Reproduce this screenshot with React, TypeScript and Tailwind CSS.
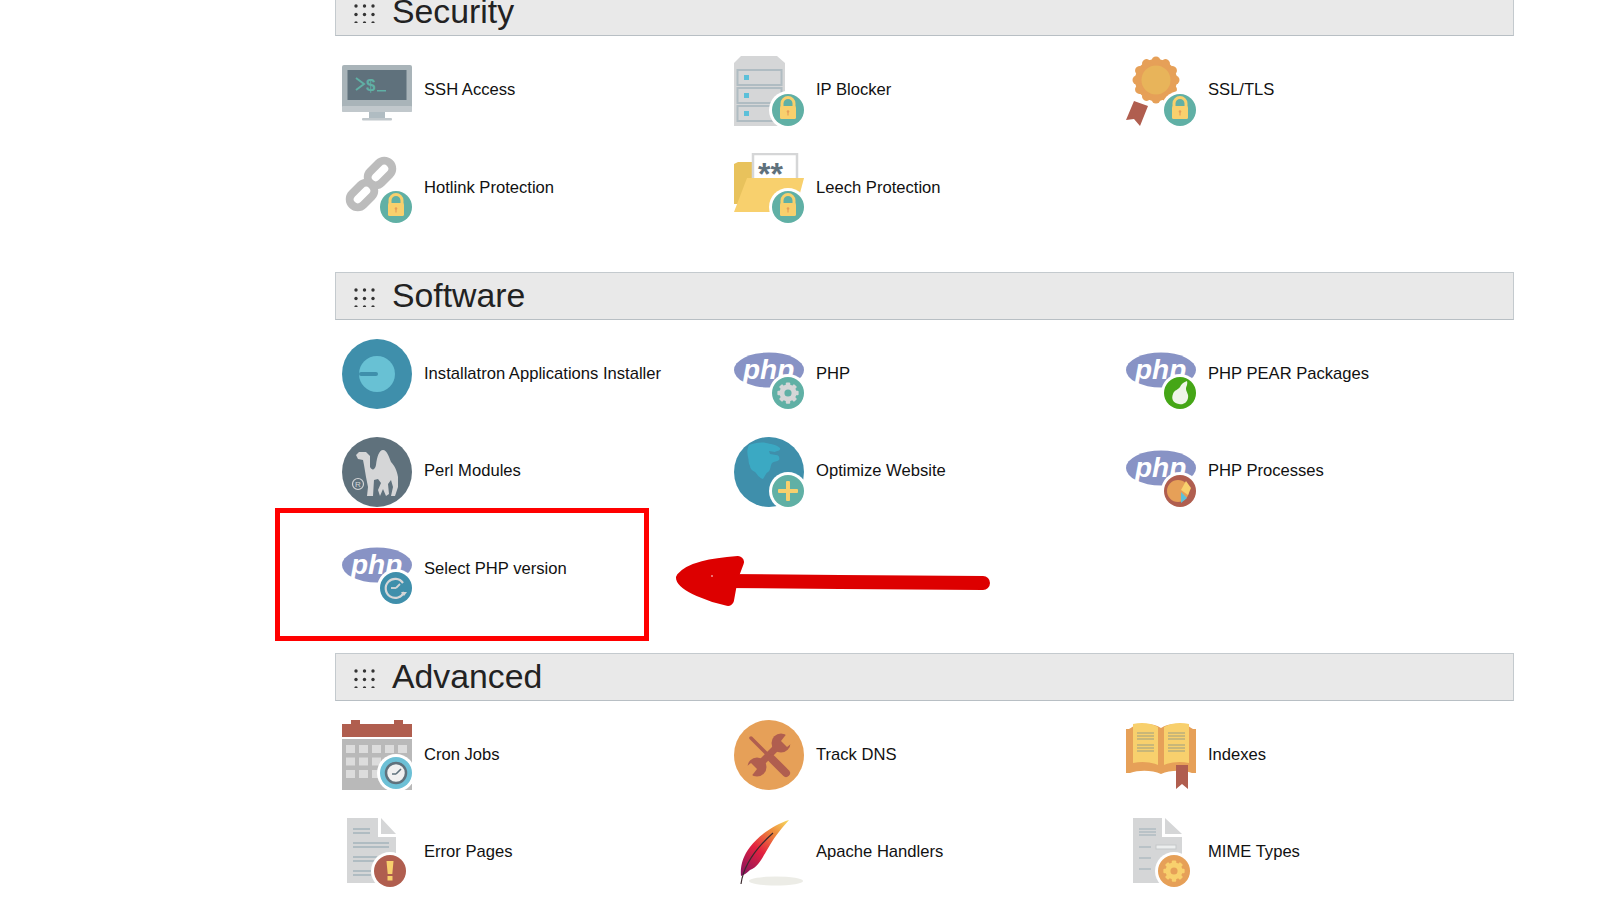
import React from 'react';

const TEAL = '#60b0a5';
const YELLOW = '#f8d06d';
const ORANGE = '#e6a058';
const BROWN = '#b05e4f';
const GRAY = '#d5d6d7';
const SLATE = '#b0bcc2';

// white ring + coloured disc shared by most icons
const Badge = ({ fill, cx = 54, cy = 54, children }: { fill: string; cx?: number; cy?: number; children?: React.ReactNode }) => (
  <g>
    <circle cx={cx} cy={cy} r={19} fill="#fff" />
    <circle cx={cx} cy={cy} r={16} fill={fill} />
    {children}
  </g>
);

const LockBadge = () => (
  <Badge fill={TEAL}>
    <path d="M48 51v-3.500a6 6 0 0 1 12 0V51" fill="none" stroke={YELLOW} strokeWidth="3" />
    <rect x="46" y="50" width="16" height="13" rx="1.500" fill={YELLOW} />
    <circle cx="54" cy="55.500" r="1.300" fill={ORANGE} />
    <rect x="53.400" y="55.500" width="1.200" height="4" fill={ORANGE} />
  </Badge>
);

const PhpLogo = () => (
  <g>
    <ellipse cx="35" cy="31" rx="35" ry="17.500" fill="#8893c5" />
    <text x="9" y="40" fill="#fff" fontFamily="'Liberation Sans', sans-serif" fontSize="28" fontWeight="700" fontStyle="italic">
      php
    </text>
  </g>
);

const GearShape = ({ cx, cy, r, fill, hole }: { cx: number; cy: number; r: number; fill: string; hole: string }) => (
  <g>
    {[0, 45, 90, 135].map((a) => (
      <rect key={a} x={cx - r * 0.26} y={cy - r * 1.25} width={r * 0.52} height={r * 2.5} rx="1" fill={fill} transform={`rotate(${a} ${cx} ${cy})`} />
    ))}
    <circle cx={cx} cy={cy} r={r} fill={fill} />
    <circle cx={cx} cy={cy} r={r * 0.42} fill={hole} />
  </g>
);

const icons: Record<string, React.ReactNode> = {
  ssh: (
    <>
      <rect x="0" y="9" width="70" height="47" rx="2" fill="#a9b4b9" />
      <rect x="0" y="50" width="70" height="6" rx="1" fill="#c1c8cc" />
      <rect x="5.500" y="14" width="59" height="30" fill="#5f717c" />
      <path d="M14 22l8 6-8 6" fill="none" stroke="#60b0a5" strokeWidth="2" />
      <text x="24" y="35" fill="#60b0a5" fontFamily="'Liberation Sans', sans-serif" fontSize="17" fontWeight="700">$</text>
      <rect x="35" y="34" width="9" height="1.500" fill="#60b0a5" />
      <path d="M27 56h16v7H27z" fill="#b0bcc2" />
      <rect x="20" y="62" width="30" height="2.500" rx="1" fill="#c1c8cc" />
    </>
  ),
  ip: (
    <>
      <path d="M7 0h36l8 7v63H0V7z" fill={GRAY} />
      <rect x="3.500" y="14" width="44" height="15" fill={GRAY} stroke={SLATE} strokeWidth="2" />
      <rect x="3.500" y="32" width="44" height="15" fill={GRAY} stroke={SLATE} strokeWidth="2" />
      <rect x="3.500" y="50" width="44" height="15" fill={GRAY} stroke={SLATE} strokeWidth="2" />
      <rect x="10" y="19" width="5" height="5" fill="#5cc0d9" />
      <rect x="10" y="37" width="5" height="5" fill="#5cc0d9" />
      <rect x="10" y="55" width="5" height="5" fill="#5cc0d9" />
      <LockBadge />
    </>
  ),
  ssl: (
    <>
      <path d="M8 45l14 5-8 20-6-7-8 1z" fill={BROWN} />
      <circle cx="30" cy="24" r="21" fill={ORANGE} />
      {[0, 30, 60, 90, 120, 150, 180, 210, 240, 270, 300, 330].map((a) => (
        <circle key={a} cx="30" cy="5" r="4.500" fill={ORANGE} transform={`rotate(${a} 30 24)`} />
      ))}
      <circle cx="30" cy="24" r="14.500" fill="#e8b45a" />
      <LockBadge />
    </>
  ),
  hotlink: (
    <>
      <g fill="none" stroke="#bcbcbc" strokeWidth="8">
        <rect x="30" y="6" width="16" height="28" rx="8" transform="rotate(45 38 20)" />
        <rect x="12" y="28" width="16" height="28" rx="8" transform="rotate(45 20 42)" />
      </g>
      <LockBadge />
    </>
  ),
  leech: (
    <>
      <path d="M0 11l4-2h14l2 6h8v36H0z" fill="#e8c25c" />
      <rect x="19" y="1" width="44" height="36" fill="#fff" stroke="#d5d6d7" strokeWidth="2.500" />
      <text x="24" y="32" fill="#5f717c" fontFamily="'Liberation Sans', sans-serif" fontSize="32" fontWeight="700">**</text>
      <path d="M13 25h57l-9 34H0z" fill={YELLOW} />
      <LockBadge />
    </>
  ),
  installatron: (
    <>
      <circle cx="35" cy="35" r="35" fill="#3f8fab" />
      <circle cx="35" cy="35" r="18" fill="#68c1d4" />
      <rect x="17" y="33" width="19" height="4" rx="2" fill="#3f8fab" />
    </>
  ),
  php: (
    <>
      <PhpLogo />
      <Badge fill={TEAL}>
        <GearShape cx={54} cy={54} r={8.500} fill={GRAY} hole={TEAL} />
      </Badge>
    </>
  ),
  pear: (
    <>
      <PhpLogo />
      <Badge fill="#45a616">
        <path d="M61 42c1 4-1 5-1 8 0 3 3 5 2 9-1 5-5 7-9 6-6-1-8-5-6-10 1-4 5-4 7-7 1-3 4-5 7-6z" fill="#eef5e8" />
      </Badge>
    </>
  ),
  perl: (
    <>
      <circle cx="35" cy="35" r="35" fill="#5f717c" />
      <path d="M14 18l3-3h7l4 4v11c2 4 5 3 6-2 1-8 3-15 7-15s6 7 8 12c3 3 6 8 7 15v10l-3 9h-4l2-9-2-7-3 4 1 10-3 2-3-7-3 7-2-6 3-7-3-4-4 1-1 16h-6l1-9-2-10-2-12-1-5-5-1z" fill={GRAY} />
      <circle cx="16" cy="47" r="5.500" fill="none" stroke={GRAY} strokeWidth="1.200" />
      <text x="16" y="50" textAnchor="middle" fill={GRAY} fontFamily="'Liberation Sans', sans-serif" fontSize="8">R</text>
    </>
  ),
  optimize: (
    <>
      <circle cx="35" cy="35" r="35" fill="#3f8fab" />
      <path d="M15 8c5-2 12-3 17-2 4 1 10 1 14 5 1 3-3 3-5 4l-6-1 1 3 6 1c3 0 4 3 3 5-2 2-5 1-7 3-2 3-1 7-4 9-2 1-3 4-5 7-4-1-6-5-8-7-2-1-5-3-5-6-2-3-1-6-2-9-1-4-1-8 1-12z" fill="#3ba9c3" />
      <Badge fill={TEAL}>
        <rect x="44" y="52" width="20" height="4" rx="1" fill={YELLOW} />
        <rect x="52" y="44" width="4" height="20" rx="1" fill={YELLOW} />
      </Badge>
    </>
  ),
  processes: (
    <>
      <PhpLogo />
      <Badge fill={BROWN}>
        <circle cx="52" cy="54" r="11" fill={ORANGE} />
        <path d="M55 53l5-9 5 7-3 7z" fill={YELLOW} />
        <path d="M55 55l6 6-6 5z" fill="#5cc0d9" />
      </Badge>
    </>
  ),
  select: (
    <>
      <PhpLogo />
      <Badge fill="#3f8fab">
        <path d="M61 49a9.500 9.500 0 1 0 1 9" fill="none" stroke={GRAY} strokeWidth="2.200" />
        <path d="M59 58h6l-3 4z" fill={GRAY} />
        <path d="M54 54l4-4" stroke={GRAY} strokeWidth="1.800" />
        <path d="M49 54h5" stroke={GRAY} strokeWidth="1.800" />
      </Badge>
    </>
  ),
  cron: (
    <>
      <path d="M0 4h70v13H0z" fill={BROWN} />
      <rect x="9" y="0" width="9" height="5" fill={BROWN} />
      <rect x="52" y="0" width="9" height="5" fill={BROWN} />
      <rect x="0" y="19" width="70" height="51" fill="#b9b9b9" />
      {[25, 37.500, 50].map((y) =>
        [4, 17, 30, 43, 56].map((x) => <rect key={`${x}-${y}`} x={x} y={y} width="9" height="8" fill="#dcdcdc" />),
      )}
      <Badge fill="#6cc0d6" cy={53}>
        <circle cx="54" cy="53" r="10" fill="#f0f0f0" stroke="#5f717c" strokeWidth="2.500" />
        <path d="M54 54l5-5M50 54h4" stroke="#5f717c" strokeWidth="1.600" />
      </Badge>
    </>
  ),
  dns: (
    <>
      <circle cx="35" cy="35" r="35" fill={ORANGE} />
      <path d="M27 43L44 26" stroke={BROWN} strokeWidth="7" />
      <circle cx="47" cy="23" r="9.500" fill={BROWN} />
      <path d="M47 21l7-9 8 8-9 7z" fill={ORANGE} />
      <circle cx="23" cy="47" r="9.500" fill={BROWN} />
      <path d="M23 49l-7 9-8-8 9-7z" fill={ORANGE} />
      <path d="M17 18L38 39" stroke={BROWN} strokeWidth="3.500" strokeLinecap="round" />
      <path d="M38 39L52 53" stroke={BROWN} strokeWidth="8" strokeLinecap="round" />
    </>
  ),
  indexes: (
    <>
      <path d="M0 9l3 0c8-6 24-7 32-1 8-6 24-5 32 1l3 0v44l-4 0c-9-3-22-3-31 1-9-4-22-4-31-1l-4 0z" fill={ORANGE} />
      <path d="M7 4c9-2 18-1 25 3v38c-7-3-16-4-25-2z" fill={YELLOW} />
      <path d="M63 4c-9-2-18-1-25 3v38c7-3 16-4 25-2z" fill={YELLOW} />
      <g stroke="#b9ae7c" strokeWidth="1.300">
        <path d="M11 13h17M11 16h17M11 19h17M11 25h17M11 28h17M11 31h17" />
        <path d="M42 13h17M42 16h17M42 19h17M42 25h17M42 28h17M42 31h17" />
      </g>
      <path d="M50 45h12v24l-6-5-6 5z" fill={BROWN} />
    </>
  ),
  error: (
    <>
      <path d="M5 0h31v19h18v46H5z" fill={GRAY} />
      <path d="M39 0l15 16H39z" fill={GRAY} />
      <path d="M11 11h17M11 15h17M11 25h36M11 29h36M11 39h24M11 43h24M11 53h18M11 57h18" stroke={SLATE} strokeWidth="1.800" />
      <Badge fill={BROWN} cx={48} cy={53}>
        <path d="M44.500 43h7l-1.200 13h-4.600z" fill={YELLOW} />
        <rect x="45.500" y="58" width="5" height="4.500" fill={YELLOW} />
      </Badge>
    </>
  ),
  apache: (
    <>
      <defs>
        <linearGradient id="feather" x1="55" y1="3" x2="8" y2="62" gradientUnits="userSpaceOnUse">
          <stop offset="0" stopColor="#f6d860" />
          <stop offset="0.25" stopColor="#ee8a3c" />
          <stop offset="0.55" stopColor="#e3213f" />
          <stop offset="1" stopColor="#7a1263" />
        </linearGradient>
      </defs>
      <ellipse cx="42" cy="63" rx="27" ry="4.500" fill="#ecece6" />
      <path d="M55 2C42 6 26 16 16 29 9 38 6 48 7 58c3-1 6-3 9-6 6-2 11-9 14-15 2-3 3-5 6-10 5-9 13-18 19-25z" fill="url(#feather)" />
      <path d="M7 66c2-15 12-33 32-51" fill="none" stroke="#3c2a2e" strokeWidth="1.200" />
    </>
  ),
  mime: (
    <>
      <path d="M7 0h29v19h20v46H7z" fill={GRAY} />
      <path d="M39 0l17 16H39z" fill={GRAY} />
      <path d="M13 11h17M13 14h17M13 17h17M13 29h12M13 40h12M13 51h12" stroke={SLATE} strokeWidth="1.300" />
      <rect x="30" y="27" width="20" height="4" fill="#eceeee" stroke="#c5c8ca" />
      <Badge fill={ORANGE} cx={48} cy={53}>
        <GearShape cx={48} cy={53} r={8.500} fill={YELLOW} hole={ORANGE} />
      </Badge>
    </>
  ),
};

const sections = [
  {
    title: 'Security',
    items: [
      ['ssh', 'SSH Access'],
      ['ip', 'IP Blocker'],
      ['ssl', 'SSL/TLS'],
      ['hotlink', 'Hotlink Protection'],
      ['leech', 'Leech Protection'],
    ],
  },
  {
    title: 'Software',
    items: [
      ['installatron', 'Installatron Applications Installer'],
      ['php', 'PHP'],
      ['pear', 'PHP PEAR Packages'],
      ['perl', 'Perl Modules'],
      ['optimize', 'Optimize Website'],
      ['processes', 'PHP Processes'],
      ['select', 'Select PHP version'],
    ],
  },
  {
    title: 'Advanced',
    items: [
      ['cron', 'Cron Jobs'],
      ['dns', 'Track DNS'],
      ['indexes', 'Indexes'],
      ['error', 'Error Pages'],
      ['apache', 'Apache Handlers'],
      ['mime', 'MIME Types'],
    ],
  },
];

const Grip = () => (
  <svg width="22" height="22" viewBox="0 0 22 22" className="shrink-0">
    {[5, 13.500, 22].map((y) =>
      [2, 10.500, 19].map((x) => <circle key={`${x}-${y}`} cx={x} cy={y} r="1.700" fill="#333" />),
    )}
  </svg>
);

export default function App() {
  return (
    <div className="relative h-[911px] w-[1600px] overflow-hidden bg-white font-['Liberation_Sans',Arial,sans-serif] text-[#111]">
      <div className="ml-[335px] -mt-3 w-[1179px]">
        {sections.map((section) => (
          <section key={section.title} className="mb-[48.5px]">
            <div className="flex h-12 items-center gap-4 border-[1.5px] border-[#c4cace] border-b-[#b8bfc4] bg-[#e9e9e9] pl-[18px]">
              <Grip />
              <h2 className="text-[33.8px] leading-none text-[#222]">{section.title}</h2>
            </div>
            <div className="grid grid-cols-[392px_392px_392px] gap-y-[27.5px] pl-[7px] pt-[19.5px]">
              {section.items.map(([icon, label]) => (
                <div key={icon} className="flex h-[70px] items-center gap-3">
                  <svg width="70" height="70" viewBox="0 0 70 70" className="shrink-0">
                    {icons[icon]}
                  </svg>
                  <span className="text-[16.6px]">{label}</span>
                </div>
              ))}
            </div>
          </section>
        ))}
      </div>

      {/* annotation drawn over the screenshot */}
      <div className="absolute left-[275px] top-[508px] h-[133px] w-[374px] border-[5px] border-[#ff0000]" />
      <svg className="absolute left-[670px] top-[550px]" width="325" height="60" viewBox="0 0 325 60">
        <path d="M68 12C42 14 20 18 12 28c2 8 28 18 46 22l4-22z" fill="#dd0000" stroke="#dd0000" strokeWidth="12" strokeLinejoin="round" />
        <path d="M55 31L170 32 313 33" fill="none" stroke="#dd0000" strokeWidth="14" strokeLinecap="round" />
        <circle cx="42" cy="26" r="0.800" fill="#fff" />
      </svg>
    </div>
  );
}
